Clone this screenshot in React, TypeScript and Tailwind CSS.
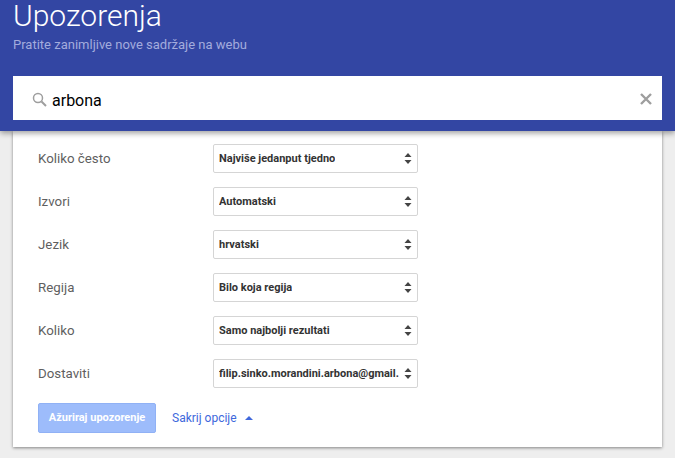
const options = [
  { label: "Koliko često", value: "Najviše jedanput tjedno" },
  { label: "Izvori", value: "Automatski" },
  { label: "Jezik", value: "hrvatski" },
  { label: "Regija", value: "Bilo koja regija" },
  { label: "Koliko", value: "Samo najbolji rezultati" },
  { label: "Dostaviti", value: "filip.sinko.morandini.arbona@gmail.com" },
];

function SelectArrows() {
  return (
    <svg width="8" height="11" viewBox="0 0 8 11" className="shrink-0">
      <path d="M4 0 L7.5 4 H0.5 Z M4 11 L7.5 7 H0.5 Z" fill="#444" />
    </svg>
  );
}

export default function App() {
  return (
    <div className="relative h-[458px] w-[675px] overflow-hidden bg-[#eeeeee] font-['Roboto',sans-serif]">
      {/* Header */}
      <div className="relative z-10 h-[131px] bg-[#3346a3] px-[13px] shadow-[0_2px_6px_rgba(0,0,0,0.4)]">
        <h1 className="text-[30px] leading-[32px] font-light text-white">Upozorenja</h1>
        <p className="mt-[5px] text-[13px] leading-[16px] text-[#a3acdd]">Pratite zanimljive nove sadržaje na webu</p>
        <div className="mt-[23px] flex h-11 w-[649px] items-center bg-white pr-[10px] pl-[19px]">
          <svg width="15" height="15" viewBox="0 0 15 15" fill="none" stroke="#9e9e9e" className="mt-[2px] shrink-0">
            <circle cx="6" cy="6" r="4.5" strokeWidth="1.5" />
            <path d="M9.5 9.5 L14 14" strokeWidth="2" />
          </svg>
          <span className="mt-[5px] ml-[5px] flex-1 text-base text-black">arbona</span>
          <svg width="12" height="12" viewBox="0 0 12 12" stroke="#9e9e9e" strokeWidth="2.4" className="mt-[2px]">
            <path d="M1 1 L11 11 M11 1 L1 11" />
          </svg>
        </div>
      </div>

      {/* Options card */}
      <div className="mx-[13px] h-[316px] w-[649px] bg-white pt-[13px] pl-[25px] shadow-[0_1px_3px_rgba(0,0,0,0.45)]">
        <div className="flex flex-col gap-[14px]">
          {options.map((o) => (
            <div key={o.label} className="flex h-[29px] items-center">
              <span className="w-[175px] text-[13.3px] text-[#5f5f5f]">{o.label}</span>
              <div className="flex h-[29px] w-[205px] items-center justify-between rounded-[2px] border border-[#d5d5d5] bg-white pr-[5px] pl-[5px]">
                <span className="mt-px overflow-hidden text-[11px] font-bold whitespace-nowrap text-[#333333]">
                  {o.value === options[5].value ? "filip.sinko.morandini.arbona@gmail." : o.value}
                </span>
                <SelectArrows />
              </div>
            </div>
          ))}
        </div>
        <div className="mt-[15px] flex items-center">
          <button className="h-[30px] w-[118px] rounded-[2px] border border-[#90b1f5] bg-[#9dbcfb] text-[11px] font-bold text-white">
            Ažuriraj upozorenje
          </button>
          <span className="ml-4 text-xs text-[#4068dc]">Sakrij opcije</span>
          <svg width="8" height="4" viewBox="0 0 8 4" className="ml-2">
            <path d="M4 0 L8 4 H0 Z" fill="#4068dc" />
          </svg>
        </div>
      </div>
    </div>
  );
}
